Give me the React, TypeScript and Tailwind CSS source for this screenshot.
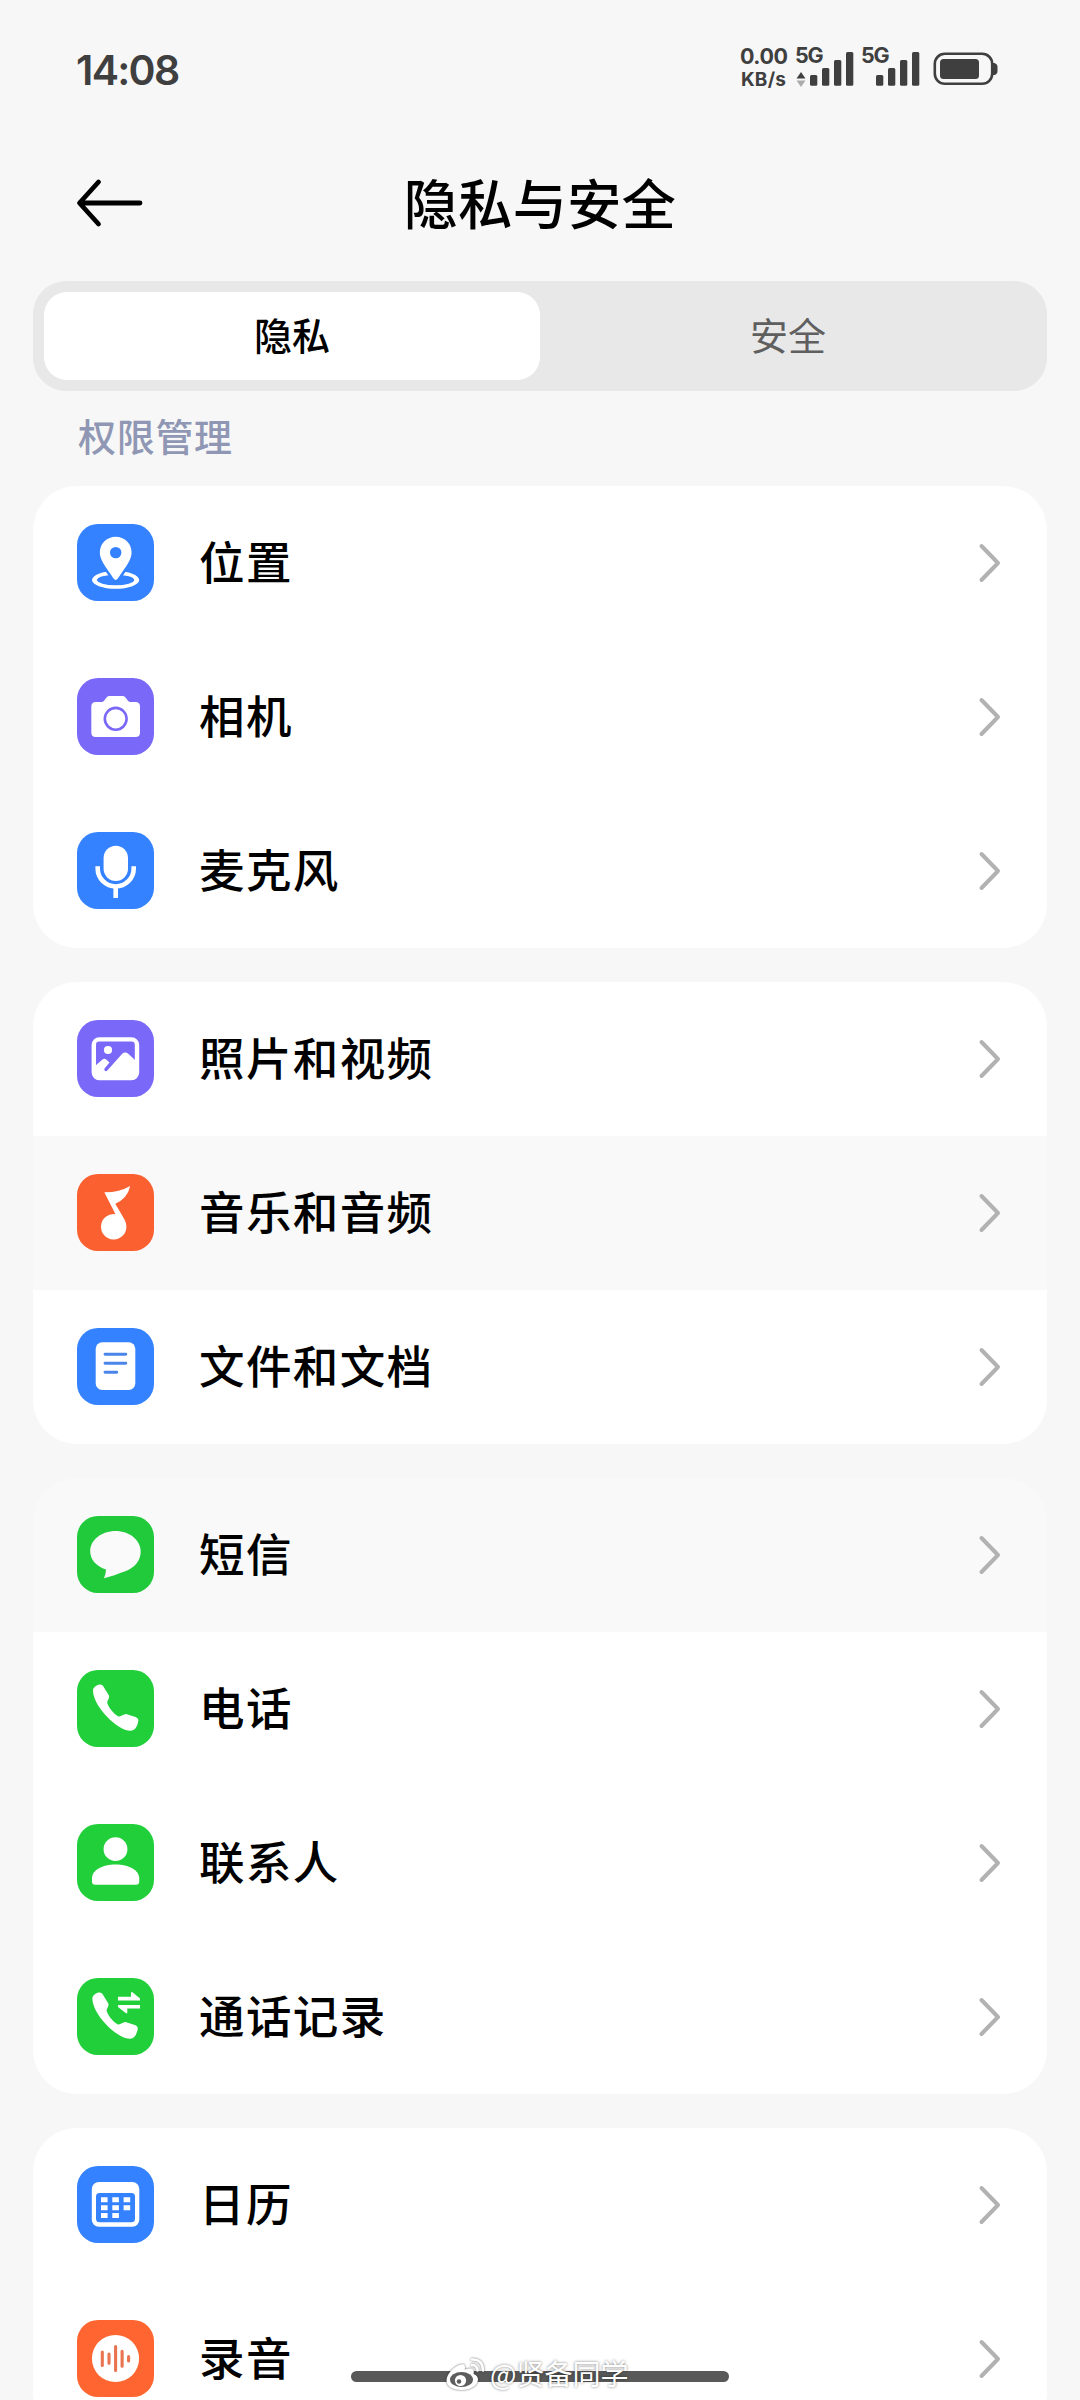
import type { ReactNode } from "react";

type Item = {
  label: string;
  bg: string;
  icon: ReactNode;
  pressed?: boolean;
};

const handset =
  "M16 21C15.5 17.5 20 14.5 23 14.5C25 14.5 26 15.8 27 17.5L31.8 25.3C33.2 28 29.8 30.5 30.3 33C31.5 37.5 36.5 43.5 41 46.3C44 47.5 46.5 43.5 49.8 44.2L58.5 47C61.3 48 61.9 50 61 52.5C59.8 57 58 60.6 53.5 60.7C41 61 16.5 37 16 21Z";

const icons = {
  location: (
    <>
      <path
        fillRule="evenodd"
        fill="#fff"
        d="M15 56a23.6 8.8 0 1 0 47.2 0a23.6 8.8 0 1 0 -47.2 0ZM20 56a18.6 5.2 0 1 0 37.2 0a18.6 5.2 0 1 0 -37.2 0Z"
      />
      <path
        d="M38.7 56C37.5 56 35.5 53 33.5 50C29 43.5 22.8 36 22.8 28.6a15.9 15.9 0 0 1 31.8 0C54.6 36 48.4 43.5 43.9 50C41.9 53 39.9 56 38.7 56Z"
        fill="#fff"
        stroke="#3482ff"
        strokeWidth="5"
        paintOrder="stroke"
      />
      <circle cx="38.7" cy="28.6" r="5.7" fill="#3482ff" />
    </>
  ),
  camera: (
    <>
      <path
        d="M14.3 28.5Q14.3 24 18.8 24H24.5Q26 24 27 22.7L29.8 19.2Q30.8 18 32.3 18H45.7Q47.2 18 48.2 19.2L51 22.7Q52 24 53.5 24H58.5Q63 24 63 28.5V54.5Q63 59 58.5 59H18.8Q14.3 59 14.3 54.5Z"
        fill="#fff"
      />
      <circle cx="38.7" cy="40.8" r="10.9" fill="none" stroke="#7a69f8" strokeWidth="2.6" />
    </>
  ),
  mic: (
    <>
      <rect x="26.6" y="13.7" width="24.4" height="35.3" rx="12.2" fill="#fff" />
      <path d="M20.7 34.2V36.5a18 18 0 0 0 36 0V34.2M38.7 55V66" fill="none" stroke="#fff" strokeWidth="4.6" />
    </>
  ),
  photo: (
    <>
      <rect x="16.8" y="19.4" width="43.2" height="38.6" rx="5.5" fill="none" stroke="#fff" strokeWidth="4.4" />
      <circle cx="31" cy="30" r="4.1" fill="#fff" />
      <path
        d="M18 46L25.5 39.5Q27.5 38 29.5 39.8L32.5 42.5L27.5 48.5Q26.7 50.3 28.2 51Q29.5 51.5 30.5 50.2L45 34Q48 31.3 51 33.6L59 41V58H18Z"
        fill="#fff"
      />
    </>
  ),
  music: (
    <path
      d="M27.3 18.3Q42 18.5 53.2 12Q50.5 24.5 38.3 29.7L47.5 45.5Q49.4 49 49.4 52.5A12.7 12.7 0 1 1 38.5 40.2Z"
      fill="#fff"
    />
  ),
  doc: (
    <>
      <rect x="18.7" y="14.3" width="39.6" height="47.7" rx="6.5" fill="#fff" />
      <path d="M28 26.2H48.8M28 35.2H48.8M28 44.2H39.8" stroke="#4a86ea" strokeWidth="2.9" strokeLinecap="round" />
    </>
  ),
  sms: (
    <path
      d="M38.5 15C52.5 15 63.7 24 63.7 35.5C63.7 45.5 56.5 52.5 47.5 55.5C41 58 34 60.5 27 62.3Q28.8 58.5 29 53.5C19.5 50.5 13.2 43.8 13.2 35.3C13.2 24 24.5 15 38.5 15Z"
      fill="#fafafa"
    />
  ),
  phone: <path d={handset} fill="#fff" />,
  contact: (
    <>
      <circle cx="38.5" cy="25.2" r="11.9" fill="#fff" />
      <path
        d="M15 54C15 46 25.5 40.4 38.6 40.4S62.2 46 62.2 54V57.5Q62.2 60.8 58.9 60.8H18.3Q15 60.8 15 57.5Z"
        fill="#fff"
      />
    </>
  ),
  callLog: (
    <>
      <path d={handset} fill="#fff" transform="translate(-0.6 0)" />
      <path
        d="M41 18.8H54V14.3H55.5L63 20.5V22.4H41ZM63 30.6H50.3V35.2H49L41 29V27H63Z"
        fill="#fff"
      />
    </>
  ),
  calendar: (
    <>
      <rect x="14.8" y="16" width="47.5" height="44.7" rx="7" fill="#fff" />
      <rect x="19" y="27" width="39" height="29.2" rx="3.5" fill="#3482ff" />
      <path
        d="M24 31.2h6.6v5h-6.6zM35.3 31.2h6.6v5h-6.6zM46.6 31.2h6.6v5h-6.6zM24 39.2h6.6v5h-6.6zM35.3 39.2h6.6v5h-6.6zM46.6 39.2h6.6v5h-6.6zM24 47h6.6v5h-6.6zM35.3 47h6.6v5h-6.6z"
        fill="#fff"
      />
    </>
  ),
  record: (
    <>
      <circle cx="38.5" cy="38.5" r="23.6" fill="#fff" />
      <path
        d="M25.3 32V45.5M32 34V43.3M38.6 26.5V50.5M45.1 31.3V46.3M51.6 36.5V41"
        stroke="#ea7350"
        strokeWidth="3.1"
        strokeLinecap="round"
      />
    </>
  ),
};

const groups: Item[][] = [
  [
    { label: "位置", bg: "bg-[#3482ff]", icon: icons.location },
    { label: "相机", bg: "bg-[#7a69f8]", icon: icons.camera },
    { label: "麦克风", bg: "bg-[#3482ff]", icon: icons.mic },
  ],
  [
    { label: "照片和视频", bg: "bg-[#7a69f8]", icon: icons.photo },
    { label: "音乐和音频", bg: "bg-[#fb6130]", icon: icons.music, pressed: true },
    { label: "文件和文档", bg: "bg-[#3482ff]", icon: icons.doc },
  ],
  [
    { label: "短信", bg: "bg-[#20ca3b]", icon: icons.sms, pressed: true },
    { label: "电话", bg: "bg-[#20cf3a]", icon: icons.phone },
    { label: "联系人", bg: "bg-[#20cf3a]", icon: icons.contact },
    { label: "通话记录", bg: "bg-[#20cf3a]", icon: icons.callLog },
  ],
  [
    { label: "日历", bg: "bg-[#3482ff]", icon: icons.calendar },
    { label: "录音", bg: "bg-[#ff6530]", icon: icons.record },
  ],
];

const Signal = () => (
  <div className="flex h-[34px]">
    <span className="-mt-[2px] text-[21.5px] leading-none font-bold w-[28px] tracking-[-1.2px]">5G</span>
    <svg width="44" height="34" viewBox="0 0 44 34" fill="#3f3f3f" className="-ml-[13px] mt-[5px]">
      <rect x="0" y="23" width="7.3" height="10.8" rx="1.5" />
      <rect x="12" y="16" width="7.3" height="17.8" rx="1.5" />
      <rect x="24" y="8" width="7.3" height="25.8" rx="1.5" />
      <rect x="36" y="0" width="7.3" height="33.8" rx="1.5" />
    </svg>
  </div>
);

const StatusBar = () => (
  <div className="flex justify-between h-[140px] pt-[47px] pl-[76px] pr-[82px] text-[#3f3f3f] font-['Inter',sans-serif]">
    <span className="text-[41px] leading-[46px] tracking-[-1.7px] font-semibold">14:08</span>
    <div className="flex items-start">
      <div className="w-[47px] mr-2 font-bold">
        <p className="-mt-[2px] text-[21.5px] leading-[22px] tracking-[-0.5px] whitespace-nowrap">0.00</p>
        <p className="text-[19px] leading-[26px] pl-[1px] tracking-[0.2px] whitespace-nowrap">KB/s</p>
      </div>
      <div className="flex">
        <svg width="10" height="16" viewBox="0 0 10 16" className="mt-[25px] ml-[1px] -mr-[11px]">
          <path d="M5 0L9.5 6.5H0.5Z" fill="#3f3f3f" />
          <path d="M5 15L9.5 8.5H0.5Z" fill="#ababab" />
        </svg>
        <Signal />
      </div>
      <div className="ml-[7px]">
        <Signal />
      </div>
      <svg width="65" height="34" viewBox="0 0 65 34" className="ml-[13px] mt-[5px]">
        <rect x="1.8" y="1.8" width="57.4" height="30" rx="10" fill="none" stroke="#3f3f3f" strokeWidth="2.6" />
        <rect x="7" y="7" width="39" height="20" rx="3.5" fill="#3f3f3f" />
        <path d="M60 11h1.5q3 1 3 4v4q0 3-3 4H60z" fill="#3f3f3f" />
      </svg>
    </div>
  </div>
);

const Row = ({ item }: { item: Item }) => (
  <div
    className={`flex items-start h-[154px] pt-[38px] pl-[44px] pr-[46px] ${
      item.pressed ? "bg-[#f9f9f9]" : "bg-white"
    }`}
  >
    <div className={`w-[77px] h-[77px] rounded-[21px] ${item.bg}`}>
      <svg width="77" height="77" viewBox="0 0 77 77">
        {item.icon}
      </svg>
    </div>
    <p className="ml-[45px] mt-[6px] flex-1 text-[45.5px] leading-[60px] tracking-[1.4px] font-medium text-black">
      {item.label}
    </p>
    <svg width="23" height="40" viewBox="0 0 23 40" fill="none" className="mt-[19px]">
      <path d="M3.5 3L20 20L3.5 37" stroke="#b2b2b2" strokeWidth="4" strokeLinecap="round" strokeLinejoin="round" />
    </svg>
  </div>
);

const HomeIndicator = () => (
  <div className="absolute left-[351px] top-[2371px] w-[378px] h-[11px] rounded-full bg-[#595959]">
    <div className="absolute left-[94px] -top-[16px] flex items-center h-[38px]">
      <svg
        width="42"
        height="36"
        viewBox="0 0 42 36"
        className="drop-shadow-[0_0_1px_rgba(0,0,0,0.6)]"
      >
        <path
          d="M16 8.5C9 10 1.5 18 1.5 24.5C1.5 31 9 34 16.500 34C26 34 33 29 33 23.5C33 20.5 31 19 28.500 18C29.500 15 28.500 12 24 12.500C22.500 12.700 21 13.200 19.800 13.600C20.500 9.500 19.500 7.700 16 8.500Z"
          fill="#fff"
        />
        <ellipse cx="16.500" cy="23.500" rx="11.500" ry="7.500" fill="#5d5d5d" />
        <circle cx="15.500" cy="24.500" r="5.600" fill="#fff" />
        <circle cx="14" cy="25.500" r="2.300" fill="#5d5d5d" />
        <path d="M27 3.500Q37.500 3 38 14.500M27 9Q32 9 32.500 14.500" stroke="#fff" strokeWidth="2.600" fill="none" strokeLinecap="round" />
      </svg>
      <span className="ml-[3px] text-[28px] leading-[36px] mb-[2px] text-white whitespace-nowrap [text-shadow:0_0_3px_rgba(0,0,0,0.55)]">
        @贤备同学
      </span>
    </div>
  </div>
);

const App = () => {
  return (
    <div className="relative w-[1080px] h-[2400px] overflow-hidden bg-[#f7f7f7] font-['Noto_Sans_CJK_SC',sans-serif]">
      <StatusBar />

      <header className="grid grid-cols-[1fr_auto_1fr] items-center h-[126px] px-[76px]">
        <svg width="68" height="50" viewBox="0 0 68 50" fill="none">
          <path
            d="M22.5 4L3.5 25L22.5 46M4 25H64"
            stroke="#000"
            strokeWidth="4.8"
            strokeLinecap="round"
            strokeLinejoin="round"
          />
        </svg>
        <h1 className="pb-[3px] text-[54px] leading-[70px] tracking-[0.5px] font-medium text-black">隐私与安全</h1>
      </header>

      <main className="px-[33px] pt-[15px]">
        <div className="grid grid-cols-2 h-[110px] p-[11px] rounded-[33px] bg-[#e8e8e8] text-[38px]">
          <button className="rounded-[23px] pb-[5px] bg-white font-medium text-black">隐私</button>
          <button className="pb-[5px] text-[#5f5f5f]">安全</button>
        </div>

        <h2 className="h-[95px] pl-[45px] pt-[14px] text-[38px] leading-[60px] tracking-[0.7px] font-medium text-[#8f97b4]">
          权限管理
        </h2>

        <div className="flex flex-col gap-[34px]">
          {groups.map((group, index) => (
            <section key={index} className="rounded-[44px] overflow-hidden">
              {group.map((item) => (
                <Row key={item.label} item={item} />
              ))}
            </section>
          ))}
        </div>
      </main>

      <HomeIndicator />
    </div>
  );
};

export default App;
